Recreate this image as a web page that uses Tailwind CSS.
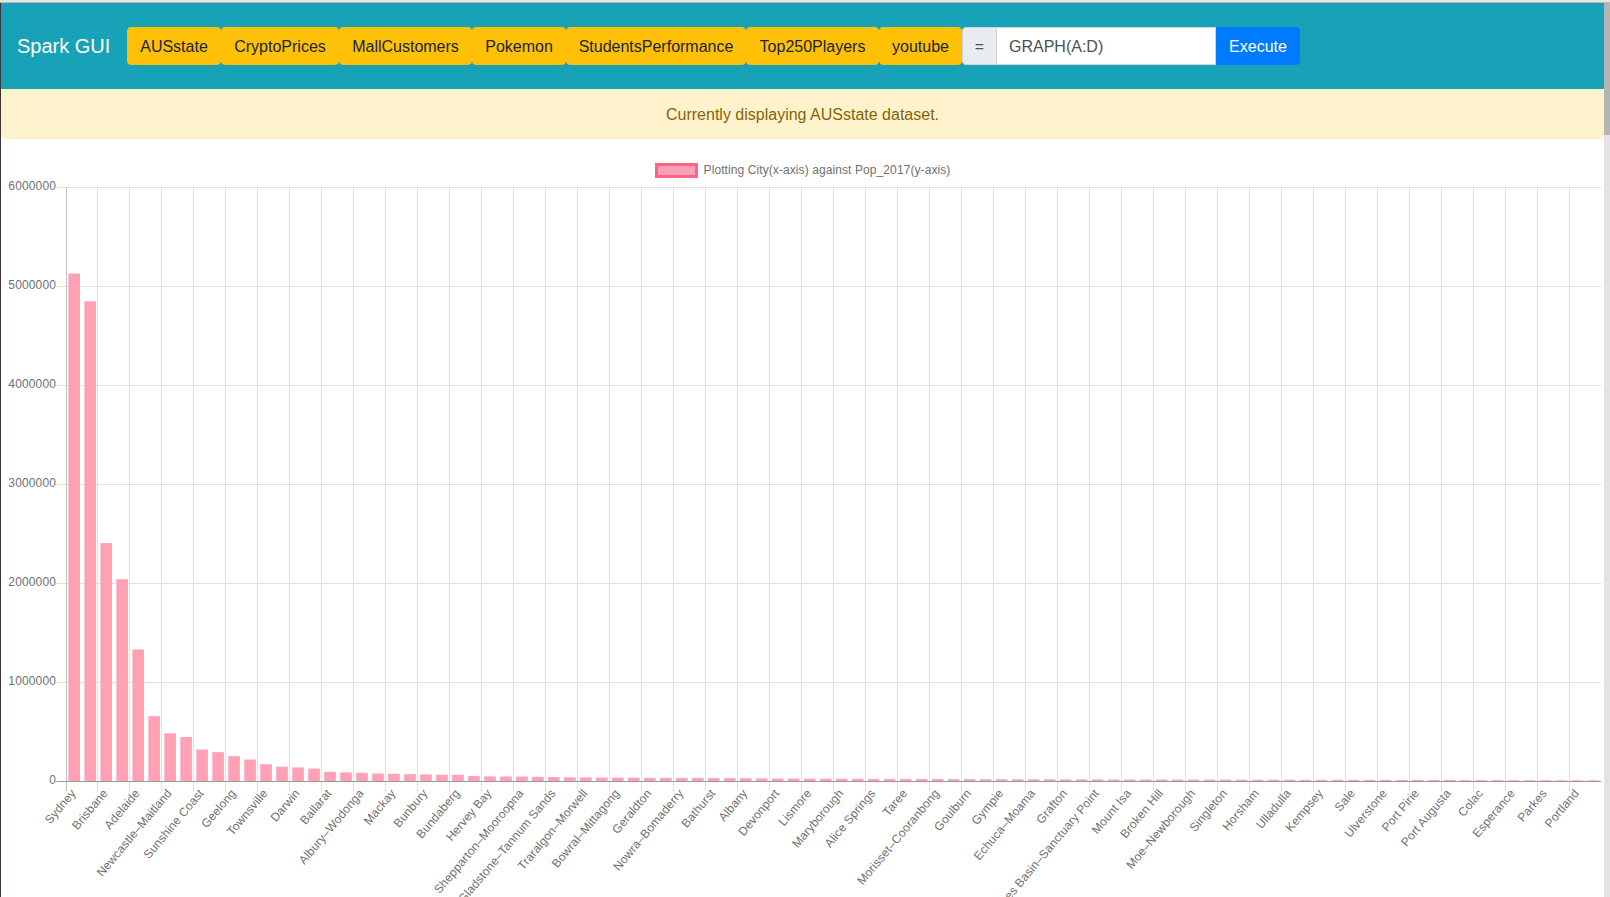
<!DOCTYPE html>
<html lang="en">
  <head>
    <meta charset="UTF-8" />
    <meta name="viewport" content="width=device-width, initial-scale=1.0" />
    <title>Spark GUI</title>
    <script src="https://cdn.jsdelivr.net/npm/@tailwindcss/browser@4"></script>
  </head>
  <body class="h-screen overflow-hidden flex flex-col bg-white font-['Liberation_Sans',Arial,sans-serif] text-base text-[#212529]">
    <div class="h-[3px] shrink-0 bg-[#e6e6e6] border-b border-[#b9b9b9]"></div>
    <div class="flex-1 min-h-0 flex">
      <div class="w-px shrink-0 bg-[#3b3535]"></div>
      <main class="flex-1 min-w-0 overflow-hidden">
        <nav class="h-[86px] flex items-center px-4 bg-[#17a2b8]">
          <a href="#" class="w-[94px] mr-4 text-[20px] text-white whitespace-nowrap">Spark GUI</a>
          <button class="w-[94px] h-[38px] pt-px rounded border border-[#ffc107] bg-[#ffc107]">AUSstate</button>
          <button class="w-[118px] h-[38px] pt-px rounded border border-[#ffc107] bg-[#ffc107]">CryptoPrices</button>
          <button class="w-[133px] h-[38px] pt-px rounded border border-[#ffc107] bg-[#ffc107]">MallCustomers</button>
          <button class="w-[94px] h-[38px] pt-px rounded border border-[#ffc107] bg-[#ffc107]">Pokemon</button>
          <button class="w-[180px] h-[38px] pt-px rounded border border-[#ffc107] bg-[#ffc107]">StudentsPerformance</button>
          <button class="w-[133px] h-[38px] pt-px rounded border border-[#ffc107] bg-[#ffc107]">Top250Players</button>
          <button class="w-[83px] h-[38px] pt-px rounded border border-[#ffc107] bg-[#ffc107]">youtube</button>
          <form class="flex">
            <span class="w-[35px] h-[38px] pt-px flex items-center justify-center bg-[#e9ecef] border border-[#ced4da] rounded-l text-[#495057]">=</span>
            <input type="text" value="GRAPH(A:D)" class="w-[220px] h-[38px] pt-px px-3 -ml-px bg-white border border-[#ced4da] text-[#495057] outline-none" />
            <button type="button" class="w-[84px] h-[38px] pt-px rounded-r border border-[#007bff] bg-[#007bff] text-white">Execute</button>
          </form>
        </nav>
        <div class="h-[50px] pt-px flex items-center justify-center rounded border border-[#ffeeba] bg-[#fff3cd] text-[#856404]">
          Currently displaying AUSstate dataset.
        </div>
        <div class="flex items-center justify-center gap-[6px] h-[15px] mt-[24px]">
          <span class="w-[43px] h-[15px] border-[3px] border-[#ff6384] bg-[#ffa1b5]"></span>
          <span class="-mt-px text-[12px] tracking-[0.09px] text-[#707070]">Plotting City(x-axis) against Pop_2017(y-axis)</span>
        </div>
        <svg id="chart" width="1603" height="720" class="block"></svg>
      </main>
      <div class="w-[6px] shrink-0 bg-[#e3e3e3]">
        <div class="h-[132px] bg-[#b5b5b5]"></div>
      </div>
    </div>

    <script>
      // Population of each urban area, in rank order
      const pops = [
        5131326, 4850740, 2408223, 2043138, 1333927, 660000, 486704, 448762,
        323000, 296000, 256000, 222000, 175000, 150000, 142000, 131000,
        98000, 92000, 88000, 81000, 78000, 74000, 71000, 68000,
        67000, 56000, 52000, 51000, 50000, 47000, 44000, 42000,
        41000, 40000, 39000, 38000, 37000, 37000, 36000, 36000,
        34000, 34000, 33000, 31000, 30000, 30000, 29000, 28000,
        27000, 27000, 26000, 26000, 26000, 25000, 25000, 24000,
        24000, 23000, 23000, 22000, 22000, 22000, 21000, 21000,
        21000, 20000, 20000, 20000, 20000, 19000, 19000, 19000,
        19000, 18000, 18000, 18000, 18000, 17000, 17000, 17000,
        16000, 16000, 16000, 15000, 15000, 15000, 15000, 14000,
        14000, 14000, 13000, 13000, 13000, 12000, 12000, 12000,
      ];
      // Only every second city gets a tick label
      const labels = [
        "Sydney", "Brisbane", "Adelaide", "Newcastle–Maitland", "Sunshine Coast", "Geelong",
        "Townsville", "Darwin", "Ballarat", "Albury–Wodonga", "Mackay", "Bunbury",
        "Bundaberg", "Hervey Bay", "Shepparton–Mooroopna", "Gladstone–Tannum Sands",
        "Traralgon–Morwell", "Bowral–Mittagong", "Geraldton", "Nowra–Bomaderry", "Bathurst",
        "Albany", "Devonport", "Lismore", "Maryborough", "Alice Springs", "Taree",
        "Morisset–Cooranbong", "Goulburn", "Gympie", "Echuca–Moama", "Grafton",
        "St Georges Basin–Sanctuary Point", "Mount Isa", "Broken Hill", "Moe–Newborough",
        "Singleton", "Horsham", "Ulladulla", "Kempsey", "Sale", "Ulverstone", "Port Pirie",
        "Port Augusta", "Colac", "Esperance", "Parkes", "Portland",
      ];

      const chart = document.getElementById("chart");
      const plotTop = 9.5;
      const plotLeft = 65;
      const plotRight = 1600;
      const plotH = 594;
      const base = plotTop + plotH;
      const step = (plotRight - plotLeft) / pops.length;
      let svg = "";

      // Grid lines
      for (let v = 1; v <= 6; v++) {
        const y = plotTop + (plotH * (6 - v)) / 6;
        svg += `<line x1="55.5" x2="${plotRight}" y1="${y}" y2="${y}" stroke="#e0e0e0" />`;
      }
      for (let v = 0; v <= 6; v++) {
        const y = plotTop + (plotH * (6 - v)) / 6;
        svg += `<text x="55" y="${y + 2.5}" text-anchor="end" class="text-[12px] tracking-[0.13px] fill-[#707070]">${v * 1000000}</text>`;
      }
      labels.forEach((name, i) => {
        const x = Math.floor(plotLeft + i * 2 * step) + 0.5;
        svg += `<line x1="${x}" x2="${x}" y1="9" y2="${base + 10}" stroke="${i === 0 ? "#c4c4c4" : "#e0e0e0"}" />`;
        const cx = plotLeft + (i * 2 + 0.5) * step;
        svg += `<text transform="translate(${cx + 2.5} ${base + 12}) rotate(-50)" text-anchor="end" class="text-[12px] tracking-[0.11px] fill-[#707070]">${name}</text>`;
      });

      // Bars
      pops.forEach((pop, i) => {
        const h = (pop / 6000000) * plotH;
        const x = plotLeft + i * step + (step - 11.6) / 2 + 0.2;
        svg += `<rect x="${x}" y="${base - h}" width="11.6" height="${h}" fill="#ffa1b5" />`;
      });
      svg += `<line x1="55.5" x2="${plotRight}" y1="${base}" y2="${base}" stroke="#999999" />`;

      chart.innerHTML = svg;
    </script>
  </body>
</html>
